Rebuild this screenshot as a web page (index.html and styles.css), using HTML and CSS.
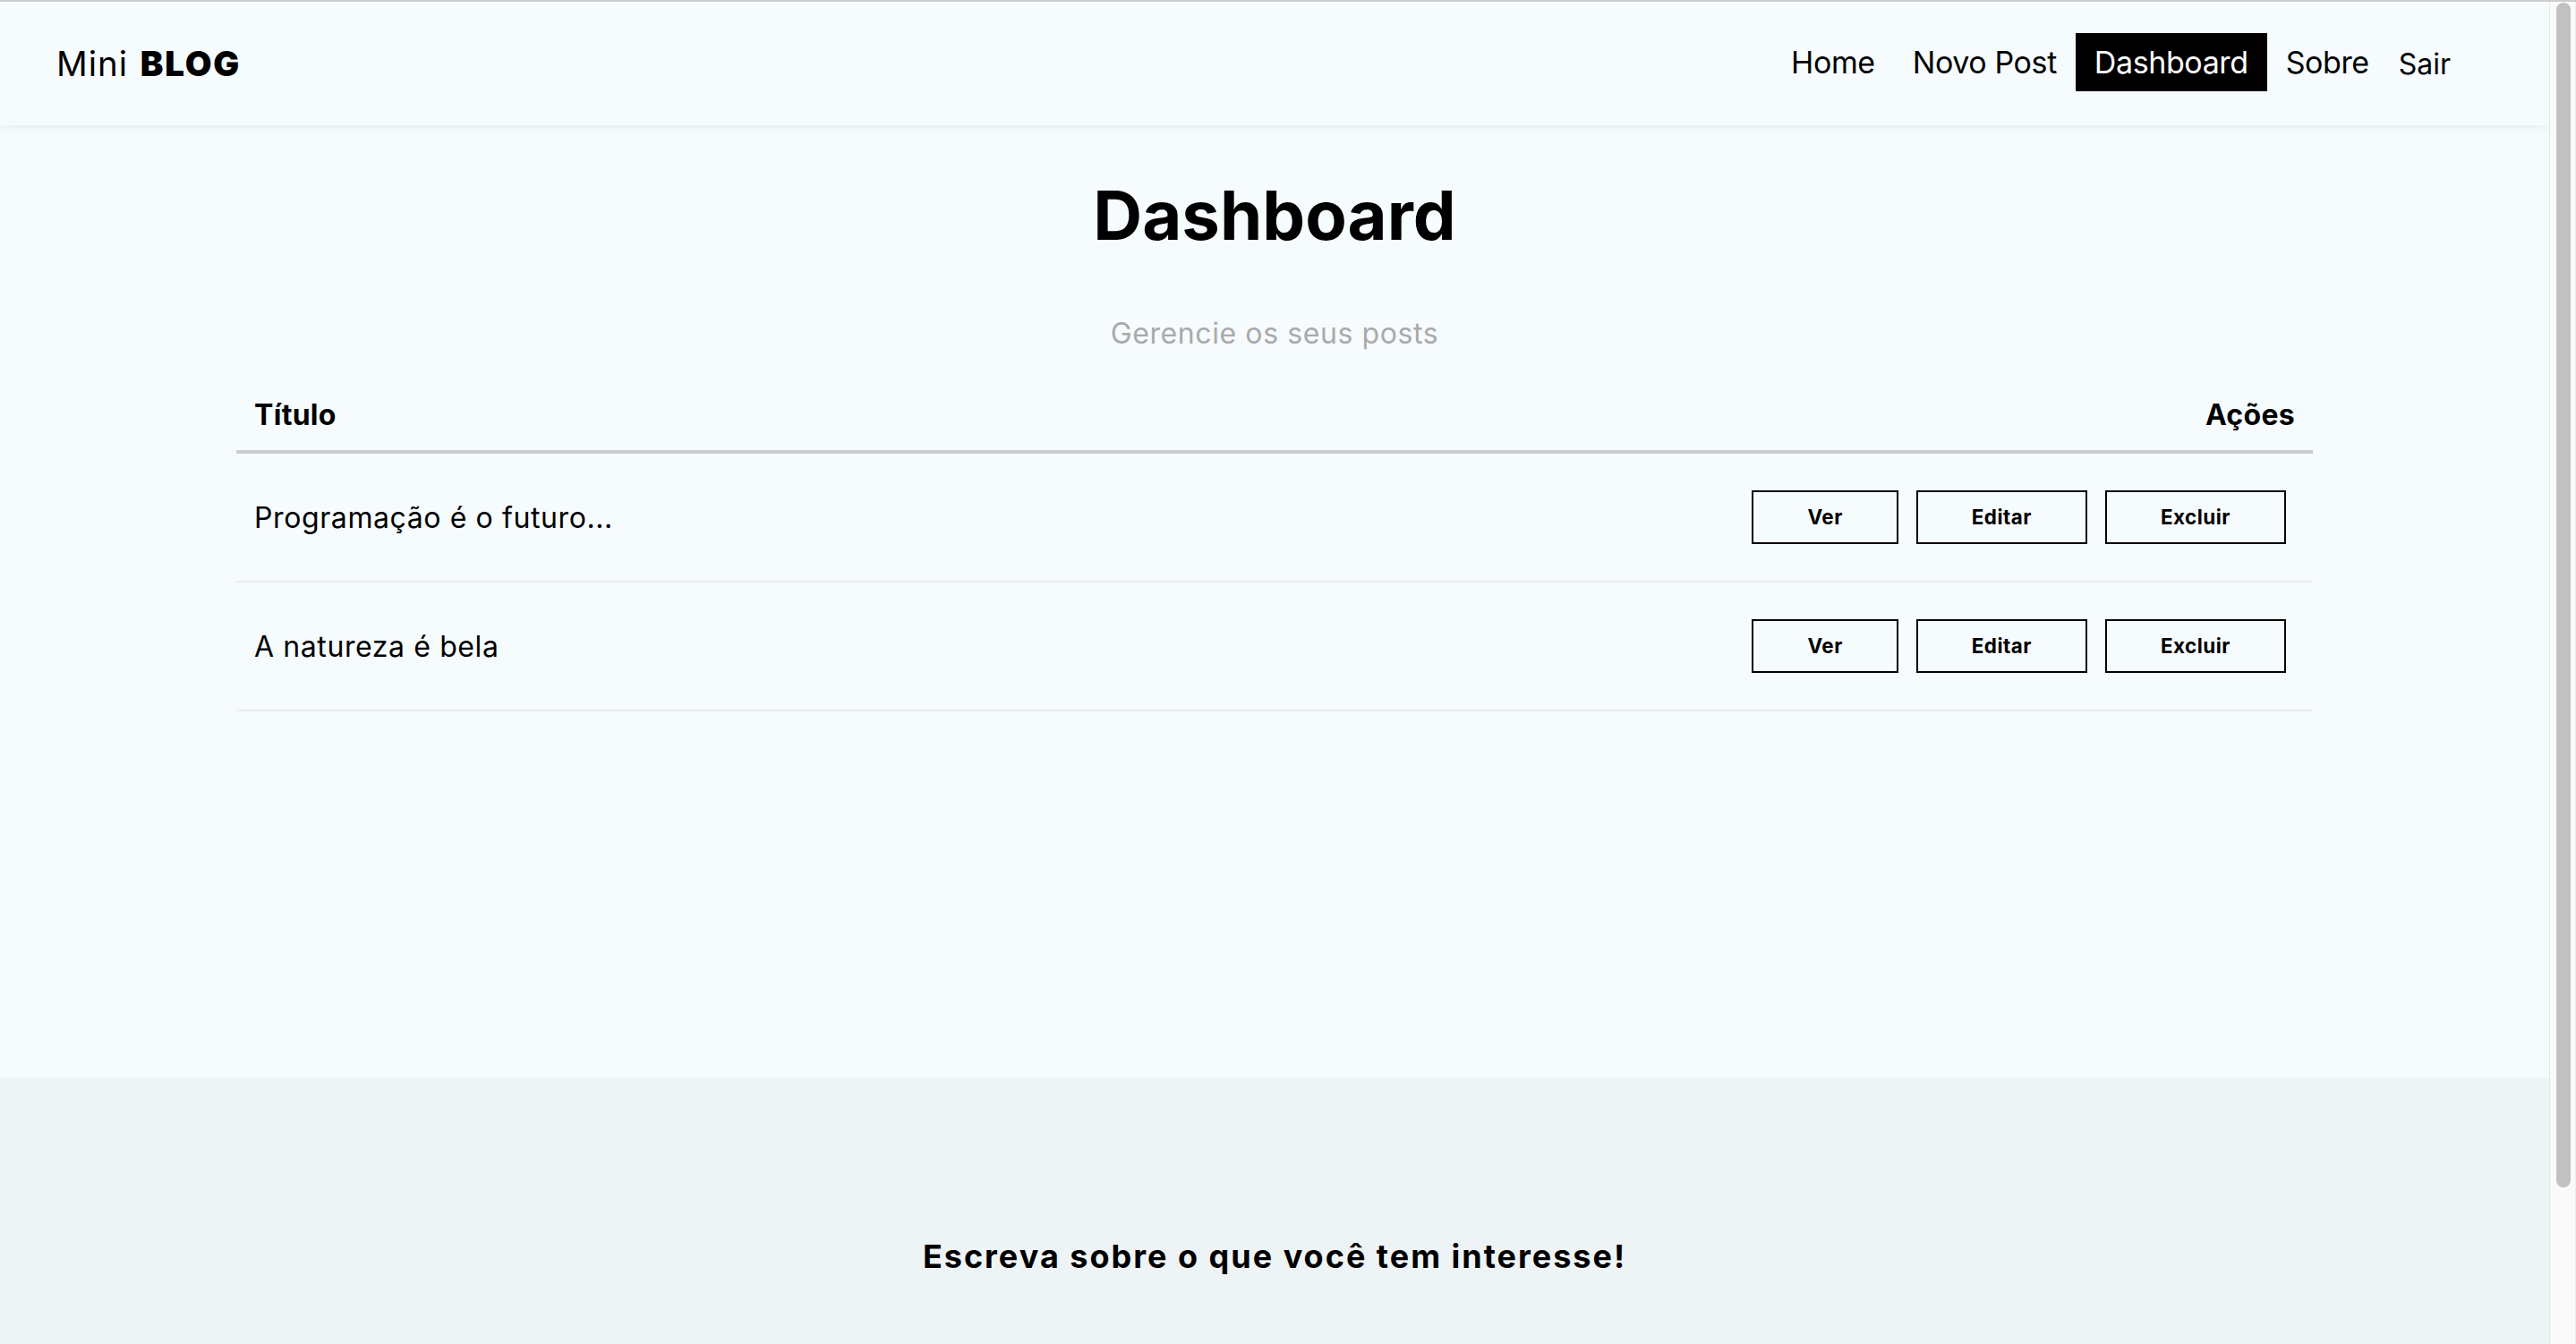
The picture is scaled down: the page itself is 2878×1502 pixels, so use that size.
FILE: index.html
```html
<!DOCTYPE html>
<html lang="pt-BR">
<head>
<meta charset="utf-8">
<title>Mini Blog - Dashboard</title>
<link rel="stylesheet" href="styles.css">
</head>
<body>
<div class="window">
  <div class="page">
    <header class="navbar">
      <a class="brand" href="#">Mini <span>BLOG</span></a>
      <ul class="nav-links">
        <li><a href="#">Home</a></li>
        <li><a href="#">Novo Post</a></li>
        <li><a href="#" class="active">Dashboard</a></li>
        <li><a href="#">Sobre</a></li>
        <li><button class="logout">Sair</button></li>
      </ul>
    </header>
    <main class="container">
      <h1 class="title">Dashboard</h1>
      <p class="subtitle">Gerencie os seus posts</p>
      <div class="post-table">
        <div class="post-header">
          <span>Título</span>
          <span>Ações</span>
        </div>
        <div class="post-row">
          <p class="post-title">Programação é o futuro...</p>
          <div class="actions">
            <a href="#" class="btn">Ver</a>
            <a href="#" class="btn">Editar</a>
            <button class="btn">Excluir</button>
          </div>
        </div>
        <div class="post-row">
          <p class="post-title">A natureza é bela</p>
          <div class="actions">
            <a href="#" class="btn">Ver</a>
            <a href="#" class="btn">Editar</a>
            <button class="btn">Excluir</button>
          </div>
        </div>
      </div>
    </main>
    <footer class="footer">
      <h3>Escreva sobre o que você tem interesse!</h3>
    </footer>
  </div>
  <div class="scrollbar"><div class="thumb"></div></div>
</div>
</body>
</html>
```

FILE: styles.css
```css
* {
  box-sizing: border-box;
}

html, body {
  margin: 0;
  padding: 0;
}

body {
  font-family: Inter, "Noto Sans", sans-serif;
  color: #000;
  background: #f6fbfe;
}

.window {
  height: 100vh;
  display: flex;
  border-top: 2px solid #cdcdcd;
  overflow: hidden;
}

.page {
  flex: 1;
  min-width: 0;
  overflow: hidden;
  background: #f6fbfe;
}

/* navbar */
.navbar {
  position: relative;
  z-index: 1;
  height: 138px;
  display: flex;
  align-items: center;
  justify-content: space-between;
  padding: 0 98px 0 63px;
  background: #f6fbfe;
  box-shadow: 0 3px 10px rgba(0, 0, 0, 0.06);
}

.brand {
  font-size: 38.4px;
  color: #000;
  text-decoration: none;
  letter-spacing: 1px;
  word-spacing: 2px;
}

.brand span {
  font-weight: 900;
  letter-spacing: 1.8px;
}

.nav-links {
  display: flex;
  align-items: center;
  list-style: none;
  margin: 0 0 3px;
  padding: 0;
}

.nav-links a {
  display: block;
  font-size: 34px;
  line-height: 43px;
  padding: 11px 21px;
  color: #000;
  text-decoration: none;
  letter-spacing: -0.4px;
}

.nav-links a.active {
  background: #000;
  color: #fff;
}

.logout {
  font-family: inherit;
  font-size: 32px;
  background: none;
  border: none;
  padding: 0 12px;
  margin-top: 3px;
  color: #000;
  cursor: pointer;
}

/* main */
.container {
  min-height: 1064px;
  display: flex;
  flex-direction: column;
  align-items: center;
  padding-top: 54px;
}

.title {
  margin: 0;
  font-size: 76px;
  line-height: 92px;
  font-weight: 700;
}

.subtitle {
  margin: 67px 0 0;
  font-size: 32px;
  line-height: 39px;
  color: #aaa;
  letter-spacing: 0.6px;
}

.post-table {
  width: 2320px;
  margin-top: 32px;
}

.post-header {
  display: flex;
  justify-content: space-between;
  padding: 20px;
  border-bottom: 4px solid #ccc;
  font-size: 32px;
  line-height: 39px;
  font-weight: 700;
  letter-spacing: 0.3px;
}

.post-row {
  display: flex;
  align-items: center;
  justify-content: space-between;
  padding: 41px 20px;
  border-bottom: 2px solid #ececec;
}

.post-title {
  margin: 0;
  font-size: 32px;
  line-height: 39px;
  letter-spacing: 0.6px;
}

.actions {
  display: flex;
}

.btn {
  display: block;
  margin: 0 10px;
  padding: 0 60px;
  height: 60px;
  line-height: 56px;
  border: 2px solid #000;
  background: transparent;
  color: #000;
  font-family: inherit;
  font-size: 22.4px;
  font-weight: 700;
  letter-spacing: 0.5px;
  text-decoration: none;
  cursor: pointer;
}

/* footer */
.footer {
  background: #eef3f5;
  text-align: center;
  padding: 179px 0 200px;
}

.footer h3 {
  margin: 0;
  font-size: 36px;
  line-height: 42.6px;
  font-weight: 700;
  letter-spacing: 2px;
}

/* scrollbar */
.scrollbar {
  flex: none;
  width: 30px;
  background: #fafafa;
  border-left: 1px solid #e6e6e6;
  border-right: 1px solid #ececec;
  padding: 1px 5px 0 7px;
}

.thumb {
  width: 16px;
  height: 1324px;
  background: #c1c1c1;
  border-radius: 8px;
}
```
